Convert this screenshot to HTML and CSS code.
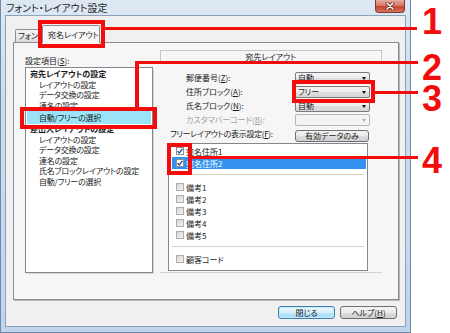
FILE: index.html
```html
<!DOCTYPE html>
<html lang="ja">
<head>
<meta charset="utf-8">
<title>フォント・レイアウト設定</title>
<link rel="stylesheet" href="styles.css">
</head>
<body>
<div class="stage">
  <div class="window">
    <div class="titlebar">
      <span class="title">フォント・レイアウト設定</span>
      <span class="close"><svg width="10" height="8" viewBox="0 0 10 8"><path d="M2 1 L8 7 M8 1 L2 7" stroke="#5a1f18" stroke-width="3" stroke-linecap="round"/><path d="M2 1 L8 7 M8 1 L2 7" stroke="#fff" stroke-width="1.6" stroke-linecap="round"/></svg></span>
    </div>
    <div class="client">
      <div class="tabs">
        <div class="tab">フォント</div>
        <div class="tab active">宛名レイアウト</div>
      </div>
      <div class="panel">
        <div class="left">
          <div class="lbl">設定項目(<u>S</u>):</div>
          <div class="listbox">
            <div class="li head">宛先レイアウトの設定</div>
            <div class="li">レイアウトの設定</div>
            <div class="li">データ交換の設定</div>
            <div class="li">連名の設定</div>
            <div class="li sel">自動/フリーの選択</div>
            <div class="li head">差出人レイアウトの設定</div>
            <div class="li">レイアウトの設定</div>
            <div class="li">データ交換の設定</div>
            <div class="li">連名の設定</div>
            <div class="li">氏名ブロックレイアウトの設定</div>
            <div class="li">自動/フリーの選択</div>
          </div>
        </div>
        <div class="group">
          <div class="ghead">宛先レイアウト</div>
          <div class="form">
            <span class="flabel">郵便番号(<u>Z</u>):</span><span class="combo">自動</span>
            <span class="flabel">住所ブロック(<u>A</u>):</span><span class="combo">フリー</span>
            <span class="flabel">氏名ブロック(<u>N</u>):</span><span class="combo">自動</span>
            <span class="flabel disabled">カスタマバーコード(<u>B</u>):</span><span class="combo disabled"></span>
          </div>
          <div class="freerow">
            <span class="freelabel">フリーレイアウトの表示設定(<u>F</u>):</span>
            <span class="btn small">有効データのみ</span>
          </div>
          <div class="checklist">
            <div class="crow"><span class="cb on"><svg width="6" height="6" viewBox="0 0 6 6"><path d="M0.6 3.2 L2.3 5 L5.4 0.8" fill="none" stroke="#2b4c9b" stroke-width="1.3"/></svg></span>宛名住所1</div>
            <div class="crow selrow"><span class="cb on"><svg width="6" height="6" viewBox="0 0 6 6"><path d="M0.6 3.2 L2.3 5 L5.4 0.8" fill="none" stroke="#2b4c9b" stroke-width="1.3"/></svg></span>宛名住所2</div>
            <div class="csep"></div>
            <div class="crow"><span class="cb"></span>備考1</div>
            <div class="crow"><span class="cb"></span>備考2</div>
            <div class="crow"><span class="cb"></span>備考3</div>
            <div class="crow"><span class="cb"></span>備考4</div>
            <div class="crow"><span class="cb"></span>備考5</div>
            <div class="csep"></div>
            <div class="crow"><span class="cb"></span>顧客コード</div>
          </div>
        </div>
      </div>
      <div class="buttons">
        <span class="btn default">閉じる</span>
        <span class="btn">ヘルプ(<u>H</u>)</span>
      </div>
    </div>
  </div>

  <div class="mark box1"></div>
  <div class="mark line1"></div>
  <div class="mark box2"></div>
  <div class="mark line2v"></div>
  <div class="mark line2h"></div>
  <div class="mark box3"></div>
  <div class="mark line3"></div>
  <div class="mark box4"></div>
  <div class="mark line4"></div>
  <div class="num n1">1</div>
  <div class="num n2">2</div>
  <div class="num n3">3</div>
  <div class="num n4">4</div>
</div>
</body>
</html>
```

FILE: styles.css
```css
* { box-sizing: border-box; }
html, body { margin: 0; padding: 0; background: #fff; }
body {
  font-family: "Noto Sans CJK JP", "Noto Sans", sans-serif;
  font-size: 8px;
  color: #1a1a1a;
  font-feature-settings: "palt";
}
u { text-decoration: underline; text-underline-offset: 1px; }

.stage { position: relative; width: 450px; height: 333px; overflow: hidden; }

.window {
  width: 411px;
  height: 333px;
  display: flex;
  flex-direction: column;
  padding: 0 4px 5px 4px;
  border: 1px solid #6f8aa8;
  border-top: none;
  background: linear-gradient(180deg, #dde8f3 0%, #cddcee 30%, #c0d5eb 100%);
}

.titlebar {
  height: 15px;
  flex: none;
  display: flex;
  justify-content: space-between;
  padding-left: 1px;
}
.title { font-size: 10px; line-height: 15px; color: #1e1e1e; }
.close {
  width: 30px;
  height: 13px;
  margin-right: 1px;
  border: 1px solid #7d3a30;
  border-top: none;
  border-radius: 0 0 4px 4px;
  background: linear-gradient(180deg, #e8ab9e 0%, #d77a69 45%, #c5432f 55%, #d4745c 100%);
  display: flex;
  align-items: center;
  justify-content: center;
}
.close svg { display: block; }

.client {
  flex: 1;
  border: 1px solid #8ba1bb;
  background: #f0f0f0;
  padding: 9px 0 0 7px;
}

.tabs {
  display: flex;
  align-items: flex-end;
  height: 17px;
  padding-left: 2px;
}
.tab {
  height: 13px;
  width: 28px;
  border: 1px solid #8c8e94;
  border-bottom: none;
  border-radius: 2px 2px 0 0;
  background: linear-gradient(180deg, #f4f4f4, #dcdcdc);
  padding-left: 2px;
  line-height: 12px;
  white-space: nowrap;
}
.tab.active {
  height: 18px;
  width: 58px;
  margin-left: -1px;
  margin-bottom: -1px;
  position: relative;
  z-index: 1;
  background: #f6f6f6;
  padding: 1px 0 0 5px;
  line-height: 16px;
}

.panel {
  width: 386px;
  height: 258px;
  border: 1px solid #898c95;
  background: #f6f6f6;
  box-shadow: 1px 1px 0 #b8b8b8;
  display: flex;
  padding: 7px 0 0 11px;
}

.left { width: 128px; flex: none; }
.lbl { padding-top: 5px; line-height: 12px; height: 17px; }
.listbox {
  height: 206px;
  border: 1px solid #828790;
  background: #fff;
  padding-top: 1px;
  box-shadow: 2px 2px 0 -1px #d8d8d8;
}
.li { height: 10.5px; line-height: 10.5px; padding-left: 13px; white-space: nowrap; letter-spacing: -0.2px; }
.li.head { padding-left: 4px; font-weight: bold; letter-spacing: 0; }
.li.sel { height: 13px; line-height: 13px; background: #9be4f8; margin: 0 1px; padding-left: 12px; }

.group {
  width: 222px;
  height: 223px;
  margin-left: 7px;
  border-bottom: 1px solid #d2d2d2;
  display: flex;
  flex-direction: column;
}
.ghead {
  height: 13px;
  border: 1px solid #c6c6c6;
  text-align: center;
  line-height: 11px;
  background: #f6f6f6;
}
.form {
  display: grid;
  grid-template-columns: 135px 75px;
  grid-auto-rows: 12px;
  row-gap: 2px;
  margin-top: 9px;
}
.flabel { padding-left: 26px; line-height: 12px; white-space: nowrap; }
.flabel.disabled { color: #a0a0a0; }
.combo {
  position: relative;
  height: 12px;
  border: 1px solid #7a7a7a;
  border-radius: 2px;
  background: linear-gradient(180deg, #f5f5f5 0%, #ececec 50%, #dedede 50%, #d6d6d6 100%);
  padding-left: 2px;
  line-height: 10px;
}
.combo::after {
  content: "";
  position: absolute;
  right: 3px;
  top: 4px;
  border-left: 2.5px solid transparent;
  border-right: 2.5px solid transparent;
  border-top: 3px solid #111;
}
.combo.disabled { border-color: #b7b7b7; background: #f4f4f4; }
.combo.disabled::after { border-top-color: #b0b0b0; }

.freerow {
  display: flex;
  height: 12px;
  margin-top: 4px;
}
.freelabel { width: 135px; padding-left: 10px; line-height: 8px; white-space: nowrap; letter-spacing: -0.3px; }

.btn {
  display: block;
  height: 13px;
  width: 57px;
  border: 1px solid #707070;
  border-radius: 3px;
  background: linear-gradient(180deg, #f3f3f3 0%, #ebebeb 50%, #dddddd 50%, #cfcfcf 100%);
  text-align: center;
  line-height: 11px;
  white-space: nowrap;
}
.btn.small { width: 74px; height: 12px; line-height: 10px; }
.btn.default {
  border-color: #3c7fb1;
  box-shadow: inset 0 0 0 1px #c6ecfc;
  background: linear-gradient(180deg, #eaf6fd 0%, #d9f0fc 50%, #bee6fd 50%, #a7d9f5 100%);
}

.checklist {
  width: 200px;
  height: 128px;
  margin: 1px 0 0 8px;
  border: 1px solid #828790;
  background: #fff;
  padding-top: 1px;
}
.crow {
  display: flex;
  align-items: center;
  height: 12px;
  margin: 0 1px 0 3px;
  padding-left: 4px;
  white-space: nowrap;
}
.crow.selrow { background: #3392f0; color: #fff; }
.cb {
  width: 8px;
  height: 8px;
  margin-right: 2px;
  border: 1px solid #adadad;
  background: linear-gradient(135deg, #d6d6d6, #f4f4f4);
  display: flex;
  align-items: center;
  justify-content: center;
}
.cb.on { background: #fff; border-color: #8e8f8f; }
.cb svg { display: block; }
.csep {
  height: 12px;
  margin: 0 3px;
  background: linear-gradient(180deg, transparent 5px, #d4d4d4 5px, #d4d4d4 6px, transparent 6px);
}

.buttons {
  display: flex;
  justify-content: flex-end;
  gap: 5px;
  margin-top: 6px;
  padding-right: 8px;
}

/* red annotation overlay */
.mark { position: absolute; }
.box1, .box2, .box3, .box4 { border: 4px solid #f20c0c; }
.line1, .line2v, .line2h, .line3, .line4 { background: #f20c0c; }
.box1 { left: 38px; top: 20px; width: 67px; height: 28px; }
.line1 { left: 105px; top: 27px; width: 312px; height: 3px; }
.box2 { left: 20px; top: 107px; width: 137px; height: 22px; }
.line2v { left: 135px; top: 61px; width: 4px; height: 47px; }
.line2h { left: 135px; top: 61px; width: 283px; height: 3px; }
.box3 { left: 292px; top: 80px; width: 83px; height: 23px; }
.line3 { left: 375px; top: 91px; width: 43px; height: 3px; }
.box4 { left: 167px; top: 143px; width: 25px; height: 32px; }
.line4 { left: 192px; top: 156px; width: 226px; height: 3px; }

.num {
  position: absolute;
  left: 422px;
  font-family: "Liberation Sans", Arial, sans-serif;
  font-weight: bold;
  font-size: 36px;
  line-height: 27px;
  height: 27px;
  color: #f20c0c;
}
.n1 { top: 8px; }
.n2 { top: 54px; }
.n3 { top: 85px; }
.n4 { top: 147px; }
```
